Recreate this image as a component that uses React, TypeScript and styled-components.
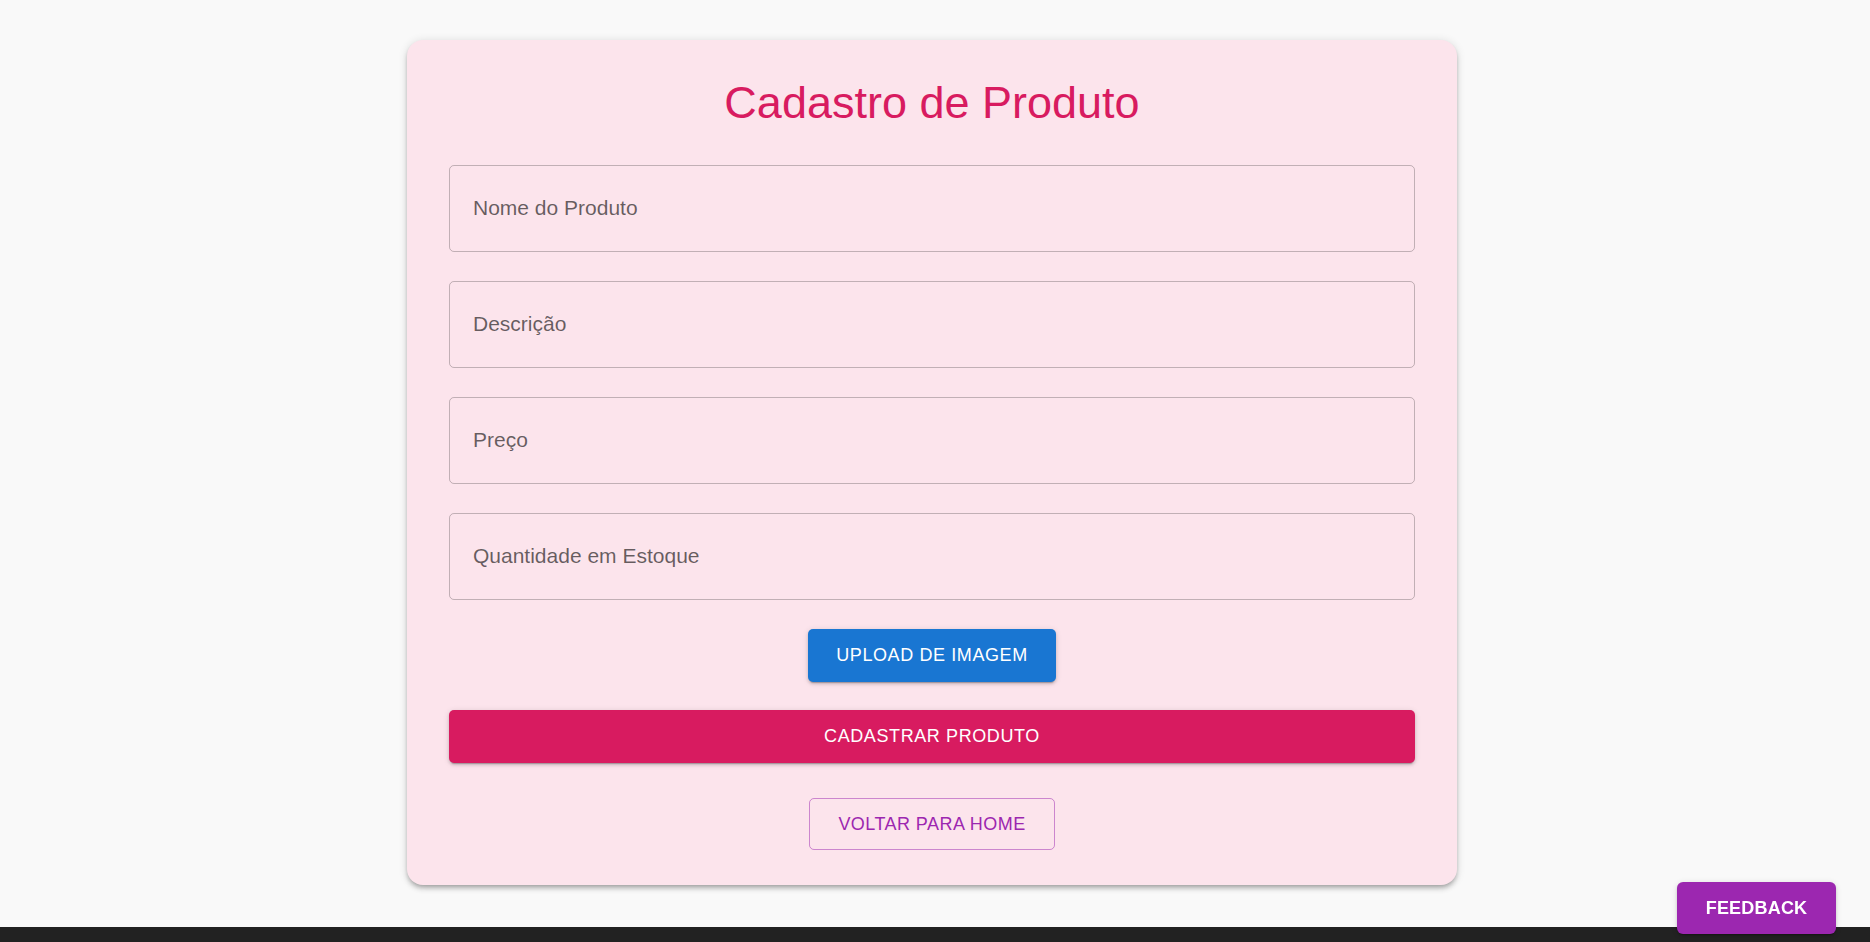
import React from "react";
import styled, { createGlobalStyle } from "styled-components";

const GlobalStyle = createGlobalStyle`
  html, body {
    margin: 0;
    padding: 0;
    background: #f9f9f9;
    font-family: "Liberation Sans", Arial, sans-serif;
  }
  * { box-sizing: border-box; }
`;

const Page = styled.div`
  min-height: 100vh;
  display: flex;
  flex-direction: column;
  background: #f9f9f9;
`;

const Main = styled.main`
  display: flex;
  justify-content: center;
  padding: 40px 6px 42px 0;
`;

const Card = styled.section`
  width: 1050px;
  background: #fce4ec;
  border-radius: 16px;
  padding: 35px 42px;
  box-shadow: 0px 3px 4px -2px rgba(0, 0, 0, 0.22),
    0px 4px 5px 0px rgba(0, 0, 0, 0.14), 0px 1px 10px 0px rgba(0, 0, 0, 0.12);
  display: flex;
  flex-direction: column;
`;

const Title = styled.h1`
  margin: 0 0 36px;
  padding-top: 1px;
  font-size: 45px;
  line-height: 53px;
  font-weight: 400;
  color: #d81b60;
  text-align: center;
`;

const Form = styled.form`
  display: flex;
  flex-direction: column;
  gap: 29px;
`;

const Field = styled.input`
  display: block;
  width: 100%;
  height: 87px;
  border: 1px solid rgba(0, 0, 0, 0.23);
  border-radius: 5px;
  background: transparent;
  padding: 0 23px 2px;
  font-family: "Liberation Sans", Arial, sans-serif;
  font-size: 21px;
  color: rgba(0, 0, 0, 0.87);
  outline: none;
  &::placeholder {
    color: rgba(0, 0, 0, 0.6);
    opacity: 1;
  }
`;

const Button = styled.button<{ $variant: "blue" | "pink" | "outline"; $full?: boolean; $offset?: number }>`
  align-self: ${(p) => (p.$full ? "stretch" : "center")};
  margin-top: ${(p) => p.$offset ?? 0}px;
  height: ${(p) => (p.$variant === "outline" ? 52 : 53)}px;
  padding: 0 28px;
  border-radius: 5px;
  font-family: "Liberation Sans", Arial, sans-serif;
  font-size: 18px;
  letter-spacing: ${(p) => (p.$variant === "outline" ? 0.45 : 0.6)}px;
  font-weight: 400;
  text-transform: uppercase;
  cursor: pointer;
  display: flex;
  align-items: center;
  justify-content: center;
  ${(p) =>
    p.$variant === "outline"
      ? `
    background: transparent;
    color: #9c27b0;
    border: 1px solid rgba(156, 39, 176, 0.5);
  `
      : `
    background: ${p.$variant === "blue" ? "#1976d2" : "#d81b60"};
    color: #ffffff;
    border: none;
    box-shadow: 0px 3px 1px -2px rgba(0,0,0,0.2), 0px 2px 3px 0px rgba(0,0,0,0.14), 0px 1px 6px 0px rgba(0,0,0,0.12);
  `}
`;

const Footer = styled.footer`
  flex: 1;
  min-height: 15px;
  background: #222222;
`;

const FeedbackButton = styled.button`
  position: fixed;
  right: 34px;
  bottom: 8px;
  width: 159px;
  height: 52px;
  border: none;
  border-radius: 6px;
  background: #9c27b0;
  color: #ffffff;
  font-family: "Liberation Sans", Arial, sans-serif;
  font-size: 18px;
  font-weight: 700;
  letter-spacing: 0.2px;
  text-transform: uppercase;
  box-shadow: 0px 3px 1px -2px rgba(0,0,0,0.2), 0px 2px 3px 0px rgba(0,0,0,0.14), 0px 1px 6px 0px rgba(0,0,0,0.12);
  cursor: pointer;
`;

export default function App() {
  return (
    <>
      <GlobalStyle />
      <Page>
        <Main>
          <Card>
            <Title>Cadastro de Produto</Title>
            <Form onSubmit={(e) => e.preventDefault()}>
              <Field placeholder="Nome do Produto" />
              <Field placeholder="Descrição" />
              <Field placeholder="Preço" />
              <Field placeholder="Quantidade em Estoque" />
              <Button type="button" $variant="blue">Upload de Imagem</Button>
              <Button type="submit" $variant="pink" $full $offset={-1}>Cadastrar Produto</Button>
              <Button type="button" $variant="outline" $offset={6}>Voltar para Home</Button>
            </Form>
          </Card>
        </Main>
        <Footer />
      </Page>
      <FeedbackButton>Feedback</FeedbackButton>
    </>
  );
}
